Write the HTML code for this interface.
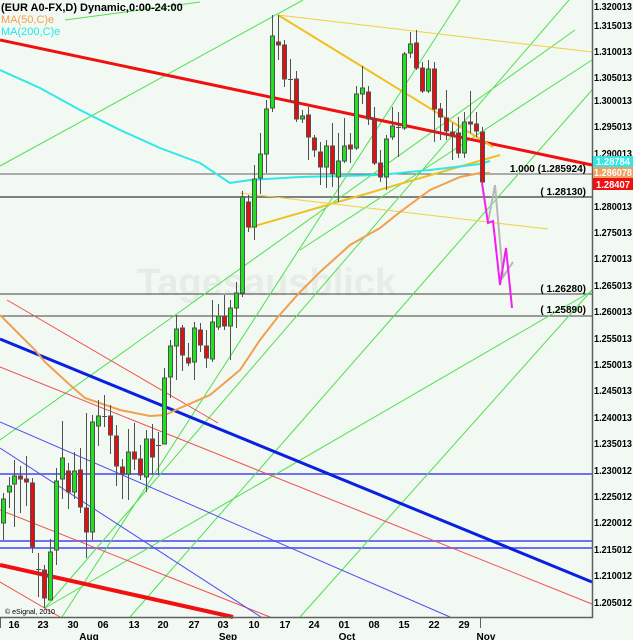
<!DOCTYPE html>
<html><head><meta charset="utf-8"><style>
html,body{margin:0;padding:0;background:#f2f8f2;}
svg{display:block;font-family:"Liberation Sans",Arial,sans-serif;}
</style></head><body>
<svg width="633" height="640" viewBox="0 0 633 640" xmlns="http://www.w3.org/2000/svg">
<rect width="633" height="640" fill="#f2f8f2"/>
<text x="137" y="295" font-size="38" font-weight="bold" fill="#e6ece6">Tagesausblick</text>
<g fill="none" stroke-linecap="butt">
<line x1="0" y1="174" x2="592" y2="174" stroke="#606060" stroke-width="1"/>
<line x1="0" y1="197" x2="592" y2="197" stroke="#808080" stroke-width="2"/>
<line x1="0" y1="294" x2="592" y2="294" stroke="#404040" stroke-width="1"/>
<line x1="0" y1="316" x2="592" y2="316" stroke="#404040" stroke-width="1"/>
<line x1="0" y1="474" x2="592" y2="474" stroke="#7070f0" stroke-width="2"/>
<line x1="0" y1="541" x2="592" y2="541" stroke="#7070f0" stroke-width="2"/>
<line x1="0" y1="548" x2="592" y2="548" stroke="#7070f0" stroke-width="2"/>
<g stroke="#50e050" stroke-width="1">
<line x1="45" y1="608" x2="569" y2="0"/>
<line x1="62" y1="617" x2="460" y2="0"/>
<line x1="45" y1="608" x2="592" y2="291"/>
<line x1="0" y1="440" x2="575" y2="30"/>
<line x1="0" y1="166" x2="303" y2="0"/>
<line x1="65" y1="20" x2="200" y2="2"/>
<line x1="130" y1="617" x2="592" y2="90"/>
<line x1="300" y1="250" x2="592" y2="60"/>
<line x1="300" y1="617" x2="592" y2="290"/>
</g>
<g stroke="#f05050" stroke-width="1">
<line x1="7" y1="300" x2="218" y2="423"/>
<line x1="0" y1="367" x2="592" y2="604"/>
<line x1="0" y1="510" x2="270" y2="617"/>
<line x1="0" y1="582" x2="60" y2="617"/>
</g>
<g stroke="#5050f0" stroke-width="1">
<line x1="0" y1="422" x2="450" y2="617"/>
<line x1="0" y1="448" x2="261" y2="617"/>
</g>
<line x1="0" y1="339" x2="592" y2="582" stroke="#0a20e0" stroke-width="3"/>
<line x1="0" y1="40" x2="592" y2="165" stroke="#f01010" stroke-width="3"/>
<line x1="0" y1="565" x2="233" y2="617" stroke="#f01010" stroke-width="4"/>
<line x1="278" y1="15" x2="592" y2="52" stroke="#f0d040" stroke-width="1"/>
<line x1="278" y1="15" x2="493" y2="147" stroke="#f0c020" stroke-width="2"/>
<line x1="248" y1="228" x2="500" y2="155" stroke="#f0c020" stroke-width="2"/>
<line x1="240" y1="193" x2="548" y2="229" stroke="#f0d040" stroke-width="1"/>
<polyline stroke="#30e8e8" stroke-width="2" points="0,70 40,88 80,110 120,130 160,148 200,163 230,183 250,180 300,177 380,175 430,170 480,164 490,161"/>
<polyline stroke="#f0a050" stroke-width="2" points="0,315 35,350 45,362 70,385 85,398 120,410 150,416 165,415 180,408 210,395 240,370 260,340 277,318 300,292 320,272 350,245 380,228 400,212 430,190 460,177 480,173 490,173"/>
<polyline stroke="#b8b8b8" stroke-width="2" points="488,222 495,185 503,277 513,262"/>
<polyline stroke="#f020f0" stroke-width="2" points="482,183 488,223 493,221 500,285 506,248 512,308"/>
</g>
<g stroke="#505050" stroke-width="1">
<line x1="3.5" y1="493" x2="3.5" y2="540"/><rect x="1.5" y="499" width="4" height="24" fill="#20e020"/>
<line x1="9.5" y1="477" x2="9.5" y2="508"/><rect x="7.5" y="486" width="4" height="6" fill="#20e020"/>
<line x1="14.5" y1="460" x2="14.5" y2="527"/><rect x="12.5" y="476" width="4" height="8" fill="#20e020"/>
<line x1="20.5" y1="466" x2="20.5" y2="513"/><rect x="18.5" y="476" width="4" height="3" fill="#e01010"/>
<line x1="26.5" y1="456" x2="26.5" y2="506"/><rect x="24.5" y="479" width="4" height="3" fill="#e01010"/>
<line x1="32.5" y1="478" x2="32.5" y2="553"/><rect x="30.5" y="483" width="4" height="64" fill="#e01010"/>
<line x1="38.5" y1="553" x2="38.5" y2="597"/><line x1="36" y1="569.5" x2="41" y2="569.5"/>
<line x1="44.5" y1="565" x2="44.5" y2="608"/><rect x="42.5" y="570" width="4" height="28" fill="#e01010"/>
<line x1="50.5" y1="539" x2="50.5" y2="600"/><rect x="48.5" y="552" width="4" height="48" fill="#20e020"/>
<line x1="56.5" y1="468" x2="56.5" y2="565"/><rect x="54.5" y="481" width="4" height="69" fill="#20e020"/>
<line x1="62.5" y1="421" x2="62.5" y2="499"/><rect x="60.5" y="458" width="4" height="21" fill="#20e020"/>
<line x1="68.5" y1="463" x2="68.5" y2="509"/><rect x="66.5" y="471" width="4" height="21" fill="#e01010"/>
<line x1="74.5" y1="452" x2="74.5" y2="499"/><rect x="72.5" y="471" width="4" height="21" fill="#20e020"/>
<line x1="80.5" y1="448" x2="80.5" y2="513"/><rect x="78.5" y="470" width="4" height="37" fill="#e01010"/>
<line x1="86.5" y1="413" x2="86.5" y2="558"/><rect x="84.5" y="508" width="4" height="24" fill="#e01010"/>
<line x1="92.5" y1="415" x2="92.5" y2="540"/><rect x="90.5" y="422" width="4" height="110" fill="#20e020"/>
<line x1="98.5" y1="400" x2="98.5" y2="446"/><rect x="96.5" y="416" width="4" height="10" fill="#20e020"/>
<line x1="104.5" y1="395" x2="104.5" y2="427"/><line x1="102" y1="416.5" x2="107" y2="416.5"/>
<line x1="110.5" y1="405" x2="110.5" y2="454"/><rect x="108.5" y="416" width="4" height="19" fill="#e01010"/>
<line x1="116.5" y1="425" x2="116.5" y2="486"/><rect x="114.5" y="436" width="4" height="30" fill="#e01010"/>
<line x1="122.5" y1="459" x2="122.5" y2="499"/><rect x="120.5" y="467" width="4" height="7" fill="#e01010"/>
<line x1="128.5" y1="429" x2="128.5" y2="500"/><rect x="126.5" y="452" width="4" height="22" fill="#20e020"/>
<line x1="134.5" y1="423" x2="134.5" y2="470"/><rect x="132.5" y="452" width="4" height="7" fill="#e01010"/>
<line x1="140.5" y1="445" x2="140.5" y2="480"/><rect x="138.5" y="459" width="4" height="16" fill="#e01010"/>
<line x1="146.5" y1="430" x2="146.5" y2="492"/><rect x="144.5" y="439" width="4" height="38" fill="#20e020"/>
<line x1="152.5" y1="424" x2="152.5" y2="475"/><rect x="150.5" y="439" width="4" height="18" fill="#e01010"/>
<line x1="158.5" y1="432" x2="158.5" y2="475"/><line x1="156" y1="445.5" x2="161" y2="445.5"/>
<line x1="164.5" y1="368" x2="164.5" y2="444"/><rect x="162.5" y="378" width="4" height="66" fill="#20e020"/>
<line x1="170.5" y1="340" x2="170.5" y2="398"/><rect x="168.5" y="346" width="4" height="31" fill="#20e020"/>
<line x1="176.5" y1="315" x2="176.5" y2="380"/><rect x="174.5" y="329" width="4" height="17" fill="#20e020"/>
<line x1="182.5" y1="325" x2="182.5" y2="371"/><rect x="180.5" y="328" width="4" height="27" fill="#e01010"/>
<line x1="188.5" y1="343" x2="188.5" y2="366"/><rect x="186.5" y="358" width="4" height="5" fill="#e01010"/>
<line x1="194.5" y1="322" x2="194.5" y2="380"/><rect x="192.5" y="328" width="4" height="34" fill="#20e020"/>
<line x1="200.5" y1="323" x2="200.5" y2="352"/><rect x="198.5" y="330" width="4" height="15" fill="#e01010"/>
<line x1="206.5" y1="330" x2="206.5" y2="368"/><rect x="204.5" y="346" width="4" height="12" fill="#e01010"/>
<line x1="212.5" y1="300" x2="212.5" y2="362"/><rect x="210.5" y="322" width="4" height="37" fill="#20e020"/>
<line x1="218.5" y1="304" x2="218.5" y2="330"/><rect x="216.5" y="316" width="4" height="11" fill="#20e020"/>
<line x1="224.5" y1="295" x2="224.5" y2="330"/><rect x="222.5" y="316" width="4" height="10" fill="#e01010"/>
<line x1="230.5" y1="300" x2="230.5" y2="360"/><rect x="228.5" y="308" width="4" height="18" fill="#20e020"/>
<line x1="236.5" y1="282" x2="236.5" y2="328"/><rect x="234.5" y="293" width="4" height="15" fill="#20e020"/>
<line x1="242.5" y1="191" x2="242.5" y2="297"/><rect x="240.5" y="197" width="4" height="96" fill="#20e020"/>
<line x1="248.5" y1="195" x2="248.5" y2="232"/><rect x="246.5" y="202" width="4" height="25" fill="#e01010"/>
<line x1="254.5" y1="165" x2="254.5" y2="240"/><rect x="252.5" y="179" width="4" height="48" fill="#20e020"/>
<line x1="260.5" y1="133" x2="260.5" y2="194"/><rect x="258.5" y="154" width="4" height="24" fill="#20e020"/>
<line x1="266.5" y1="100" x2="266.5" y2="173"/><rect x="264.5" y="109" width="4" height="45" fill="#20e020"/>
<line x1="272.5" y1="15" x2="272.5" y2="112"/><rect x="270.5" y="36" width="4" height="72" fill="#20e020"/>
<line x1="278.5" y1="15" x2="278.5" y2="60"/><rect x="276.5" y="42" width="4" height="3" fill="#e01010"/>
<line x1="284.5" y1="40" x2="284.5" y2="87"/><rect x="282.5" y="45" width="4" height="34" fill="#e01010"/>
<line x1="290.5" y1="59" x2="290.5" y2="102"/><line x1="288" y1="79.5" x2="293" y2="79.5"/>
<line x1="296.5" y1="71" x2="296.5" y2="122"/><rect x="294.5" y="79" width="4" height="40" fill="#e01010"/>
<line x1="302.5" y1="110" x2="302.5" y2="123"/><rect x="300.5" y="116" width="4" height="3" fill="#20e020"/>
<line x1="308.5" y1="107" x2="308.5" y2="160"/><rect x="306.5" y="115" width="4" height="22" fill="#e01010"/>
<line x1="314.5" y1="135" x2="314.5" y2="157"/><rect x="312.5" y="138" width="4" height="12" fill="#e01010"/>
<line x1="320.5" y1="142" x2="320.5" y2="185"/><rect x="318.5" y="152" width="4" height="15" fill="#e01010"/>
<line x1="326.5" y1="140" x2="326.5" y2="188"/><rect x="324.5" y="146" width="4" height="21" fill="#20e020"/>
<line x1="332.5" y1="123" x2="332.5" y2="187"/><rect x="330.5" y="146" width="4" height="28" fill="#e01010"/>
<line x1="338.5" y1="133" x2="338.5" y2="202"/><rect x="336.5" y="161" width="4" height="16" fill="#20e020"/>
<line x1="344.5" y1="118" x2="344.5" y2="163"/><rect x="342.5" y="146" width="4" height="15" fill="#20e020"/>
<line x1="350.5" y1="133" x2="350.5" y2="163"/><rect x="348.5" y="145" width="4" height="4" fill="#e01010"/>
<line x1="356.5" y1="86" x2="356.5" y2="150"/><rect x="354.5" y="94" width="4" height="54" fill="#20e020"/>
<line x1="362.5" y1="66" x2="362.5" y2="104"/><rect x="360.5" y="88" width="4" height="6" fill="#20e020"/>
<line x1="368.5" y1="86" x2="368.5" y2="125"/><rect x="366.5" y="92" width="4" height="27" fill="#e01010"/>
<line x1="374.5" y1="107" x2="374.5" y2="165"/><rect x="372.5" y="119" width="4" height="44" fill="#e01010"/>
<line x1="380.5" y1="150" x2="380.5" y2="182"/><rect x="378.5" y="163" width="4" height="14" fill="#e01010"/>
<line x1="386.5" y1="135" x2="386.5" y2="190"/><rect x="384.5" y="139" width="4" height="38" fill="#20e020"/>
<line x1="392.5" y1="107" x2="392.5" y2="140"/><rect x="390.5" y="126" width="4" height="11" fill="#20e020"/>
<line x1="398.5" y1="112" x2="398.5" y2="157"/><line x1="396" y1="127.5" x2="401" y2="127.5"/>
<line x1="404.5" y1="52" x2="404.5" y2="130"/><rect x="402.5" y="54" width="4" height="74" fill="#20e020"/>
<line x1="410.5" y1="32" x2="410.5" y2="58"/><rect x="408.5" y="44" width="4" height="9" fill="#20e020"/>
<line x1="416.5" y1="30" x2="416.5" y2="70"/><rect x="414.5" y="43" width="4" height="25" fill="#e01010"/>
<line x1="422.5" y1="62" x2="422.5" y2="93"/><rect x="420.5" y="68" width="4" height="23" fill="#e01010"/>
<line x1="428.5" y1="60" x2="428.5" y2="93"/><rect x="426.5" y="69" width="4" height="22" fill="#20e020"/>
<line x1="434.5" y1="62" x2="434.5" y2="142"/><rect x="432.5" y="69" width="4" height="40" fill="#e01010"/>
<line x1="440.5" y1="103" x2="440.5" y2="140"/><rect x="438.5" y="109" width="4" height="8" fill="#e01010"/>
<line x1="446.5" y1="90" x2="446.5" y2="140"/><rect x="444.5" y="118" width="4" height="13" fill="#e01010"/>
<line x1="452.5" y1="123" x2="452.5" y2="160"/><rect x="450.5" y="132" width="4" height="4" fill="#e01010"/>
<line x1="458.5" y1="117" x2="458.5" y2="158"/><rect x="456.5" y="133" width="4" height="20" fill="#e01010"/>
<line x1="464.5" y1="112" x2="464.5" y2="158"/><rect x="462.5" y="122" width="4" height="31" fill="#20e020"/>
<line x1="470.5" y1="91" x2="470.5" y2="133"/><rect x="468.5" y="122" width="4" height="2" fill="#e01010"/>
<line x1="476.5" y1="112" x2="476.5" y2="137"/><rect x="474.5" y="124" width="4" height="7" fill="#e01010"/>
<line x1="482.5" y1="127" x2="482.5" y2="183"/><rect x="480.5" y="132" width="4" height="50" fill="#e01010"/>
</g>
<g font-size="11" font-weight="bold">
<text x="1" y="11" fill="#000">(EUR A0-FX,D) Dynamic,0:00-24:00</text>
<text x="1" y="23" fill="#f0a050" font-weight="normal">MA(50,C)e</text>
<text x="1" y="35" fill="#20e8e8" font-weight="normal">MA(200,C)e</text>
</g>
<g font-size="10" font-weight="bold" fill="#000" text-anchor="end">
<text x="586" y="172">1.000  (1.285924)</text>
<text x="586" y="195">( 1.28130)</text>
<text x="586" y="292">( 1.26280)</text>
<text x="586" y="313">( 1.25890)</text>
</g>
<text x="5" y="614" font-size="7" fill="#000">© eSignal, 2010</text>
<rect x="593" y="0" width="40" height="640" fill="#f2f8f2"/>
<line x1="592.5" y1="0" x2="592.5" y2="618" stroke="#606060" stroke-width="1.5"/>
<line x1="0" y1="617.5" x2="593" y2="617.5" stroke="#606060" stroke-width="1.5"/>
<g font-size="10" font-weight="bold" fill="#000">
<text x="594" y="10" textLength="38" lengthAdjust="spacingAndGlyphs">1.320013</text>
<text x="594" y="29" textLength="38" lengthAdjust="spacingAndGlyphs">1.315013</text>
<text x="594" y="55" textLength="38" lengthAdjust="spacingAndGlyphs">1.310013</text>
<text x="594" y="81" textLength="38" lengthAdjust="spacingAndGlyphs">1.305013</text>
<text x="594" y="104" textLength="38" lengthAdjust="spacingAndGlyphs">1.300013</text>
<text x="594" y="130" textLength="38" lengthAdjust="spacingAndGlyphs">1.295013</text>
<text x="594" y="157" textLength="38" lengthAdjust="spacingAndGlyphs">1.290013</text>
<text x="594" y="210" textLength="38" lengthAdjust="spacingAndGlyphs">1.280013</text>
<text x="594" y="236" textLength="38" lengthAdjust="spacingAndGlyphs">1.275013</text>
<text x="594" y="262" textLength="38" lengthAdjust="spacingAndGlyphs">1.270013</text>
<text x="594" y="289" textLength="38" lengthAdjust="spacingAndGlyphs">1.265013</text>
<text x="594" y="315" textLength="38" lengthAdjust="spacingAndGlyphs">1.260013</text>
<text x="594" y="342" textLength="38" lengthAdjust="spacingAndGlyphs">1.255013</text>
<text x="594" y="368" textLength="38" lengthAdjust="spacingAndGlyphs">1.250013</text>
<text x="594" y="394" textLength="38" lengthAdjust="spacingAndGlyphs">1.245013</text>
<text x="594" y="421" textLength="38" lengthAdjust="spacingAndGlyphs">1.240013</text>
<text x="594" y="447" textLength="38" lengthAdjust="spacingAndGlyphs">1.235013</text>
<text x="594" y="474" textLength="38" lengthAdjust="spacingAndGlyphs">1.230012</text>
<text x="594" y="500" textLength="38" lengthAdjust="spacingAndGlyphs">1.225012</text>
<text x="594" y="526" textLength="38" lengthAdjust="spacingAndGlyphs">1.220012</text>
<text x="594" y="553" textLength="38" lengthAdjust="spacingAndGlyphs">1.215012</text>
<text x="594" y="579" textLength="38" lengthAdjust="spacingAndGlyphs">1.210012</text>
<text x="594" y="606" textLength="38" lengthAdjust="spacingAndGlyphs">1.205012</text>
</g>
<rect x="593" y="156" width="40" height="11" fill="#30e8e8"/>
<text x="596" y="165" font-size="10" font-weight="bold" fill="#fff" textLength="34" lengthAdjust="spacingAndGlyphs">1.28784</text>
<rect x="593" y="167" width="40" height="11" fill="#f0a060"/>
<text x="594" y="176" font-size="10" font-weight="bold" fill="#fff" textLength="38" lengthAdjust="spacingAndGlyphs">1.286078</text>
<rect x="593" y="178" width="40" height="12" fill="#f01010"/>
<text x="596" y="188" font-size="10" font-weight="bold" fill="#fff" textLength="34" lengthAdjust="spacingAndGlyphs">1.28407</text>
<g font-size="10" font-weight="bold" fill="#000" text-anchor="middle">
<text x="14" y="628">16</text><text x="43" y="628">23</text><text x="73" y="628">30</text><text x="103" y="628">06</text>
<text x="134" y="628">13</text><text x="163" y="628">20</text><text x="194" y="628">27</text><text x="223" y="628">03</text>
<text x="254" y="628">10</text><text x="285" y="628">17</text><text x="314" y="628">24</text><text x="344" y="628">01</text>
<text x="374" y="628">08</text><text x="404" y="628">15</text><text x="434" y="628">22</text><text x="464" y="628">29</text>
<text x="89" y="640">Aug</text><text x="228" y="640">Sep</text><text x="347" y="640">Oct</text><text x="486" y="640">Nov</text>
</g>
<g stroke="#606060" stroke-width="1">
<line x1="0.5" y1="617" x2="0.5" y2="628"/><line x1="480.5" y1="617" x2="480.5" y2="628"/>
</g>
</svg>
</body></html>
